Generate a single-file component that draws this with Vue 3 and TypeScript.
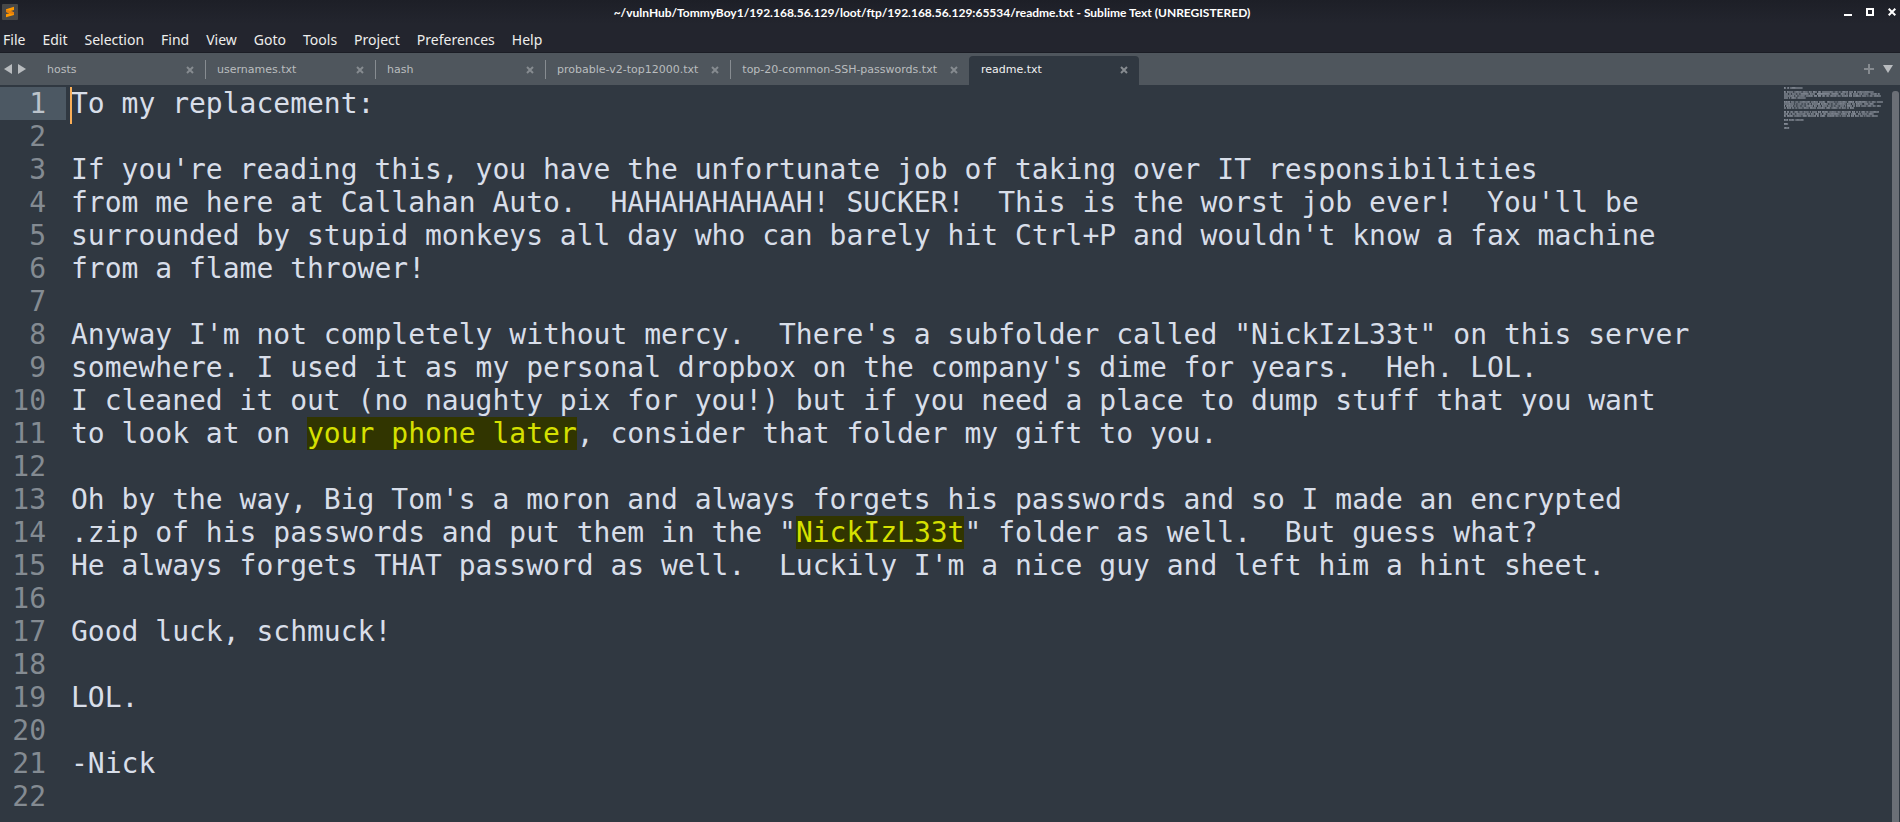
<script setup lang="ts">
import { ref } from 'vue'

interface Segment {
  text: string
  marked: boolean
}

interface Bar {
  x: number
  y: number
  tall: boolean
}

const title = '~/vulnHub/TommyBoy1/192.168.56.129/loot/ftp/192.168.56.129:65534/readme.txt - Sublime Text (UNREGISTERED)'
const menus: string[] = ['File', 'Edit', 'Selection', 'Find', 'View', 'Goto', 'Tools', 'Project', 'Preferences', 'Help']
const tabs: string[] = ['hosts', 'usernames.txt', 'hash', 'probable-v2-top12000.txt', 'top-20-common-SSH-passwords.txt', 'readme.txt']
const activeTab = ref(5)

// Square brackets enclose highlighted passages.
const source: string[] = [
  'To my replacement:',
  '',
  "If you're reading this, you have the unfortunate job of taking over IT responsibilities",
  "from me here at Callahan Auto.  HAHAHAHAHAAH! SUCKER!  This is the worst job ever!  You'll be",
  "surrounded by stupid monkeys all day who can barely hit Ctrl+P and wouldn't know a fax machine",
  'from a flame thrower!',
  '',
  'Anyway I\'m not completely without mercy.  There\'s a subfolder called "NickIzL33t" on this server',
  "somewhere. I used it as my personal dropbox on the company's dime for years.  Heh. LOL.",
  'I cleaned it out (no naughty pix for you!) but if you need a place to dump stuff that you want',
  'to look at on [your phone later], consider that folder my gift to you.',
  '',
  "Oh by the way, Big Tom's a moron and always forgets his passwords and so I made an encrypted",
  '.zip of his passwords and put them in the "[NickIzL33t]" folder as well.  But guess what?',
  "He always forgets THAT password as well.  Luckily I'm a nice guy and left him a hint sheet.",
  '',
  'Good luck, schmuck!',
  '',
  'LOL.',
  '',
  '-Nick',
  '',
]

const lines: Segment[][] = source.map((line) =>
  line
    .split(/[[\]]/)
    .map((text, i) => ({ text, marked: i % 2 === 1 }))
    .filter((s) => s.text.length > 0),
)

const bars: Bar[] = source.flatMap((line, row) =>
  [...line.replace(/[[\]]/g, '')].flatMap((ch, col) =>
    ch === ' ' ? [] : [{ x: col, y: row * 2, tall: /[A-Zabdghklpqy0-9]/.test(ch) }],
  ),
)
</script>

<template>
  <div class="window">
    <header class="titlebar">
      <svg class="logo" viewBox="0 0 16 16" aria-hidden="true">
        <rect width="16" height="16" rx="1" fill="#484848" />
        <path d="M4 5.2 12 2.8V6L8.5 7.1 12 8.2V10.9L4 13.3V10.3L7.5 9.2 4 8.1Z" fill="#ff9800" />
        <path d="M4 8.1 7.5 9.2 12 10.4V8.2L8.5 7.1 4 5.4Z" fill="#e57f0c" />
      </svg>
      <h1 class="title">{{ title }}</h1>
      <div class="controls">
        <button type="button" aria-label="Minimize">
          <svg viewBox="0 0 8 8"><path d="M0 6H8V8H0Z" fill="#fff" /></svg>
        </button>
        <button type="button" aria-label="Maximize">
          <svg viewBox="0 0 8 8"><path d="M1 1H7V7H1Z" fill="none" stroke="#fff" stroke-width="2" /></svg>
        </button>
        <button type="button" aria-label="Close">
          <svg viewBox="0 0 8 8"><path d="M.7.7 7.3 7.3M7.3.7.7 7.3" stroke="#fff" stroke-width="2" /></svg>
        </button>
      </div>
    </header>

    <nav class="menubar" aria-label="Main menu">
      <button v-for="m in menus" :key="m" type="button">{{ m }}</button>
    </nav>

    <div class="tabbar">
      <div class="history">
        <button type="button" aria-label="Previous tab">
          <svg viewBox="0 0 8 10"><path d="M8 0V10L0 5Z" fill="#b9bcbf" /></svg>
        </button>
        <button type="button" aria-label="Next tab">
          <svg viewBox="0 0 8 10"><path d="M0 0V10L8 5Z" fill="#b9bcbf" /></svg>
        </button>
      </div>
      <div class="tabs">
        <div v-for="(t, i) in tabs" :key="t" class="tab" :class="{ active: i === activeTab, plain: i + 1 === activeTab }">
          <button type="button" class="name" @click="activeTab = i">{{ t }}</button>
          <button type="button" class="close" :aria-label="'Close ' + t">
            <svg viewBox="0 0 8 8"><path d="M1 1 7 7M7 1 1 7" stroke="#868b90" stroke-width="2" /></svg>
          </button>
        </div>
      </div>
      <div class="actions">
        <button type="button" class="add" aria-label="New tab">
          <svg viewBox="0 0 10 10"><path d="M5 0V10M0 5H10" stroke="#868b90" stroke-width="2" /></svg>
        </button>
        <button type="button" class="list" aria-label="Show tabs">
          <svg viewBox="0 0 10 8"><path d="M0 0H10L5 8Z" fill="#b9bcbf" /></svg>
        </button>
      </div>
    </div>

    <main class="editor">
      <div class="code">
        <div v-for="(line, i) in lines" :key="i" class="row" :class="{ current: i === 0 }">
          <span class="number">{{ i + 1 }}</span>
          <span class="text"><template v-for="(s, j) in line" :key="j"><mark v-if="s.marked">{{ s.text }}</mark><template v-else>{{ s.text }}</template></template></span>
        </div>
      </div>
      <svg class="minimap" viewBox="0 0 100 44" preserveAspectRatio="none" aria-hidden="true">
        <g fill="#d8dee9">
          <template v-for="(b, i) in bars" :key="i">
            <rect :x="b.x" :y="b.y" width="1" height="1" :opacity="b.tall ? 0.5 : 0.36" />
            <rect :x="b.x" :y="b.y + 1" width="1" height="1" :opacity="b.tall ? 0.42 : 0.36" />
          </template>
        </g>
      </svg>
      <div class="scroll"><div class="thumb"></div></div>
    </main>
  </div>
</template>

<style>
body {
  margin: 0;
  background: #303841;
}
</style>

<style scoped>
.window {
  display: flex;
  flex-direction: column;
  min-height: 100vh;
  background: #303841;
  font-family: "Noto Sans", sans-serif;
}
button {
  padding: 0;
  border: 0;
  background: none;
  color: inherit;
  font: inherit;
}
svg {
  display: block;
}
.titlebar {
  display: grid;
  grid-template-columns: 60px 1fr 60px;
  align-items: center;
  height: 24px;
  background: linear-gradient(#1d1f27, #23252e);
}
.logo {
  width: 16px;
  height: 16px;
  margin-left: 2px;
}
.title {
  margin: 0;
  color: #fff;
  font-family: Lato, "Noto Sans", sans-serif;
  font-size: 12px;
  font-weight: 700;
  text-align: center;
  white-space: nowrap;
  padding-right: 36px;
}
.controls {
  display: flex;
  gap: 14px;
  justify-content: flex-end;
  padding-right: 4px;
}
.controls svg,
.close svg {
  width: 8px;
  height: 8px;
}
.menubar {
  display: flex;
  gap: 17px;
  box-sizing: border-box;
  height: 29px;
  padding: 3px 3px 0;
  background: #23252e;
  border-bottom: 1px solid #1b1d25;
  color: #eeeeec;
  font-size: 14px;
}
.tabbar {
  display: flex;
  height: 32px;
  background: #4f565d;
  color: #babdbf;
  font-family: "DejaVu Sans", sans-serif;
  font-size: 11px;
}
.history {
  display: flex;
  gap: 6px;
  align-items: center;
  width: 31px;
  padding-left: 4px;
}
.history svg {
  width: 8px;
  height: 10px;
}
.tabs {
  display: flex;
  flex: 1;
}
.tab {
  position: relative;
  display: flex;
  align-items: center;
  gap: 13px;
  box-sizing: border-box;
  min-width: 170px;
  padding: 0 11px 0 12px;
}
.tab::after {
  content: "";
  position: absolute;
  right: -1px;
  top: 7px;
  bottom: 6px;
  width: 1px;
  background: #878c91;
}
.tab.plain::after,
.tab.active::after {
  display: none;
}
.name {
  flex: 1;
  text-align: left;
  white-space: nowrap;
}
.close {
  padding-top: 2px;
}
.tab.active {
  margin-top: 3px;
  padding-bottom: 3px;
  border-radius: 4px 4px 0 0;
  background: #303841;
  color: #f0f1f2;
}
.actions {
  display: flex;
  gap: 9px;
  align-items: center;
  padding-right: 7px;
}
.add svg {
  width: 10px;
  height: 10px;
}
.list svg {
  width: 10px;
  height: 8px;
}
.editor {
  display: flex;
  align-items: flex-start;
  flex: 1;
  color: #d8dee9;
}
.code {
  flex: 1;
  padding-top: 2px;
  font-family: "DejaVu Sans Mono", monospace;
  font-size: 28px;
  line-height: 33px;
}
.row {
  display: flex;
  height: 33px;
}
.number {
  box-sizing: border-box;
  width: 66px;
  padding-right: 20px;
  color: #848b92;
  text-align: right;
}
.text {
  position: relative;
  padding-left: 5px;
  white-space: pre;
}
.current .number {
  background: #4c5863;
  color: #bcc3cb;
}
.current .text::before {
  content: "";
  position: absolute;
  left: 4px;
  top: 0;
  width: 2px;
  height: 37px;
  background: #f9ae58;
}
mark {
  background: #313500;
  color: #d6e000;
}
.minimap {
  width: 103px;
  height: 44px;
  padding: 2px 5px 0 0;
}
.scroll {
  align-self: stretch;
  display: flex;
  padding: 6px 1px 0 0;
}
.thumb {
  width: 7px;
  border-radius: 3px 3px 0 0;
  background: #6b6f76;
}
</style>
